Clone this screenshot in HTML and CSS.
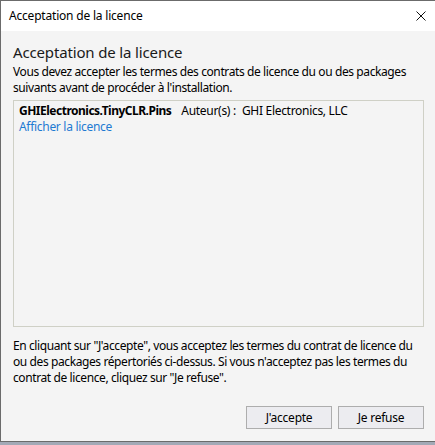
FILE: index.html
```html
<!DOCTYPE html>
<html lang="fr">
<head>
<meta charset="utf-8">
<link rel="stylesheet" href="styles.css">
</head>
<body>
<div class="window">
  <div class="titlebar">
    <span class="title">Acceptation de la licence</span>
    <svg class="close" width="10" height="10" viewBox="0 0 10 10"><path d="M0.5 0.5 L9.5 9.5 M9.5 0.5 L0.5 9.5" stroke="#111" stroke-width="1" fill="none"/></svg>
  </div>
  <div class="content">
    <h1 class="heading">Acceptation de la licence</h1>
    <p class="intro">Vous devez accepter les termes des contrats de licence du ou des packages suivants avant de procéder à l'installation.</p>
    <div class="list">
      <div class="item">
        <div class="item-line"><span class="pkg">GHIElectronics.TinyCLR.Pins</span><span class="author">Auteur(s) :</span><span class="author-name">GHI Electronics, LLC</span></div>
        <a class="link" href="#">Afficher la licence</a>
      </div>
    </div>
    <p class="notice">En cliquant sur "J'accepte", vous acceptez les termes du contrat de licence du ou des packages répertoriés ci-dessus. Si vous n'acceptez pas les termes du contrat de licence, cliquez sur "Je refuse".</p>
    <div class="buttons">
      <button class="btn">J'accepte</button>
      <button class="btn">Je refuse</button>
    </div>
  </div>
</div>
</body>
</html>
```
FILE: styles.css
```css
html, body {
  margin: 0;
  padding: 0;
  background: #a3a9b6;
  height: 445px;
  overflow: hidden;
}
body {
  font-family: "Noto Sans", "Open Sans", sans-serif;
  font-size: 12px;
  color: #000;
}
.window {
  box-sizing: border-box;
  width: 435px;
  height: 442px;
  border-top: 1px solid #6b6b6b;
  border-left: 1px solid #6b6b6b;
  border-bottom: 1px solid #6b6b6b;
  background: #f4f4f4;
  display: flex;
  flex-direction: column;
}
.titlebar {
  height: 30px;
  background: #fff;
  display: flex;
  align-items: center;
  justify-content: space-between;
  padding: 0 9px 0 8px;
  flex-shrink: 0;
}
.title {
  font-size: 12px;
  letter-spacing: -0.2px;
  margin-top: -1px;
}
.content {
  flex: 1;
  display: flex;
  flex-direction: column;
  padding: 11px 11px 12px 12px;
}
.heading {
  margin: 0;
  font-weight: normal;
  font-size: 15px;
  line-height: 20px;
  color: #1a1a1a;
  letter-spacing: -0.15px;
}
.intro, .notice {
  margin: 0;
  line-height: 16px;
  letter-spacing: -0.4px;
}
.intro {
  margin-top: 2px;
}
.list {
  box-sizing: border-box;
  margin-top: 4px;
  height: 227px;
  border: 1px solid #cfd0c6;
  background: #f4f4f4;
  padding: 2px 5px;
  flex-shrink: 0;
}
.item-line {
  display: flex;
  line-height: 16px;
  letter-spacing: -0.3px;
}
.pkg {
  font-weight: bold;
  letter-spacing: -0.5px;
  margin-right: 10px;
}
.author {
  margin-right: 6px;
}
.link {
  display: block;
  color: #1f7ad2;
  text-decoration: none;
  line-height: 16px;
  letter-spacing: -0.3px;
}
.notice {
  margin-top: 11px;
}
.buttons {
  margin-top: auto;
  display: flex;
  justify-content: flex-end;
  gap: 6px;
}
.btn {
  width: 86px;
  height: 23px;
  border: 1px solid #adadad;
  background: #ececf0;
  font-family: inherit;
  font-size: 12px;
  letter-spacing: -0.25px;
  padding: 0;
  color: #000;
}
```
